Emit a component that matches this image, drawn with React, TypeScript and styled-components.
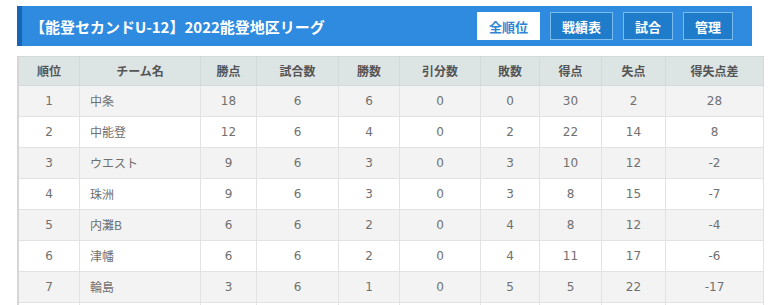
import styled, { createGlobalStyle } from "styled-components";

const GlobalStyle = createGlobalStyle`
  body {
    margin: 0;
    background: #ffffff;
    font-family: "DejaVu Sans", "Noto Sans CJK JP", sans-serif;
  }
`;

const Page = styled.div`
  padding: 6px 19px 0 17px;
`;

const TitleBar = styled.div`
  display: flex;
  align-items: center;
  height: 40px;
  background: #2e8be0;
  border-left: 5px solid #1865b5;
  padding: 0 19px 0 8px;
`;

const Title = styled.h1`
  flex: 1;
  margin: 0;
  color: #ffffff;
  font-size: 15px;
  font-weight: bold;
  font-family: "Noto Sans CJK JP", sans-serif;
`;

const Nav = styled.div`
  display: flex;
  gap: 10px;
`;

const NavButton = styled.a<{ $active?: boolean }>`
  display: flex;
  align-items: center;
  height: 28px;
  box-sizing: border-box;
  padding: 0 11px;
  font-size: 13px;
  font-weight: bold;
  font-family: "Noto Sans CJK JP", sans-serif;
  text-decoration: none;
  color: ${(p) => (p.$active ? "#2e86d4" : "#ffffff")};
  background: ${(p) => (p.$active ? "#ffffff" : "#1f7ccb")};
  border: 1px solid ${(p) => (p.$active ? "#ffffff" : "#7cbcec")};
`;

const Table = styled.table`
  width: 100%;
  margin-top: 10px;
  border-collapse: collapse;
  table-layout: fixed;
  border-left: 2px solid #d6d6d6;
`;

const Head = styled.th<{ $w: number }>`
  width: ${(p) => p.$w}px;
  height: 28px;
  padding: 0;
  background: #dde4e4;
  color: #555555;
  font-size: 12px;
  line-height: 16px;
  font-weight: bold;
  font-family: "Noto Sans CJK JP", sans-serif;
  text-align: center;
  border: 1px solid #d2d9d9;
`;

const Row = styled.tr<{ $odd: boolean }>`
  height: 31px;
  background: ${(p) => (p.$odd ? "#f3f3f3" : "#ffffff")};
`;

const Cell = styled.td<{ $left?: boolean }>`
  padding: 0 ${(p) => (p.$left ? "10px" : "0")};
  color: #707070;
  font-size: 12px;
  line-height: 16px;
  text-align: ${(p) => (p.$left ? "left" : "center")};
  border: 1px solid #e2e2e2;
  font-family: ${(p) =>
    p.$left ? '"Noto Sans CJK JP", sans-serif' : '"DejaVu Sans", sans-serif'};
`;

const columns: [string, number][] = [
  ["順位", 60],
  ["チーム名", 120],
  ["勝点", 55],
  ["試合数", 81],
  ["勝数", 60],
  ["引分数", 80],
  ["敗数", 58],
  ["得点", 61],
  ["失点", 63],
  ["得失点差", 97],
];

const rows: (string | number)[][] = [
  [1, "中条", 18, 6, 6, 0, 0, 30, 2, 28],
  [2, "中能登", 12, 6, 4, 0, 2, 22, 14, 8],
  [3, "ウエスト", 9, 6, 3, 0, 3, 10, 12, -2],
  [4, "珠洲", 9, 6, 3, 0, 3, 8, 15, -7],
  [5, "内灘B", 6, 6, 2, 0, 4, 8, 12, -4],
  [6, "津幡", 6, 6, 2, 0, 4, 11, 17, -6],
  [7, "輪島", 3, 6, 1, 0, 5, 5, 22, -17],
  ["", "", "", "", "", "", "", "", "", ""],
];

export default function App() {
  return (
    <Page>
      <GlobalStyle />
      <TitleBar>
        <Title>【能登セカンドU-12】2022能登地区リーグ</Title>
        <Nav>
          <NavButton $active>全順位</NavButton>
          <NavButton>戦績表</NavButton>
          <NavButton>試合</NavButton>
          <NavButton>管理</NavButton>
        </Nav>
      </TitleBar>
      <Table>
        <thead>
          <tr>
            {columns.map(([label, w]) => (
              <Head key={label} $w={w}>
                {label}
              </Head>
            ))}
          </tr>
        </thead>
        <tbody>
          {rows.map((r, i) => (
            <Row key={i} $odd={i % 2 === 0}>
              {r.map((v, j) => (
                <Cell key={j} $left={j === 1}>
                  {v}
                </Cell>
              ))}
            </Row>
          ))}
        </tbody>
      </Table>
    </Page>
  );
}
